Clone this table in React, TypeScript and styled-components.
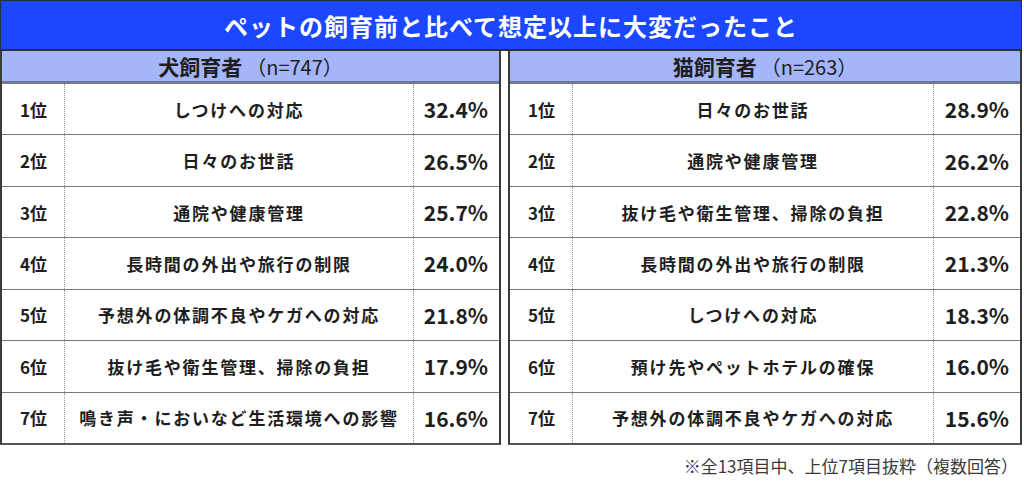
import * as React from "react";
import styled, { createGlobalStyle } from "styled-components";

type Item = {
  label: string;
  pct: string;
};

type Group = {
  name: string;
  n: number;
  items: Item[];
};

const groups: Group[] = [
  {
    name: "犬飼育者",
    n: 747,
    items: [
      { label: "しつけへの対応", pct: "32.4%" },
      { label: "日々のお世話", pct: "26.5%" },
      { label: "通院や健康管理", pct: "25.7%" },
      { label: "長時間の外出や旅行の制限", pct: "24.0%" },
      { label: "予想外の体調不良やケガへの対応", pct: "21.8%" },
      { label: "抜け毛や衛生管理、掃除の負担", pct: "17.9%" },
      { label: "鳴き声・においなど生活環境への影響", pct: "16.6%" },
    ],
  },
  {
    name: "猫飼育者",
    n: 263,
    items: [
      { label: "日々のお世話", pct: "28.9%" },
      { label: "通院や健康管理", pct: "26.2%" },
      { label: "抜け毛や衛生管理、掃除の負担", pct: "22.8%" },
      { label: "長時間の外出や旅行の制限", pct: "21.3%" },
      { label: "しつけへの対応", pct: "18.3%" },
      { label: "預け先やペットホテルの確保", pct: "16.0%" },
      { label: "予想外の体調不良やケガへの対応", pct: "15.6%" },
    ],
  },
];

const GlobalStyle = createGlobalStyle`
  html, body {
    margin: 0;
    padding: 0;
    background: #ffffff;
  }
  body {
    font-family: "Noto Sans CJK JP", "Noto Sans", sans-serif;
    color: #1e1e1e;
  }
  * {
    box-sizing: border-box;
  }
`;

const Page = styled.div`
  width: 1024px;
  height: 484px;
  padding-right: 2px;
  display: flex;
  flex-direction: column;
`;

const TitleBar = styled.div`
  height: 51px;
  background: #1a47ff;
  border: 1px solid #2a2d3c;
  border-bottom-width: 2px;
  color: #ffffff;
  display: flex;
  align-items: center;
  justify-content: center;
  font-size: 24px;
  font-weight: 700;
  letter-spacing: 1px;
`;

const Tables = styled.div`
  display: flex;
  gap: 7px;
  height: 394px;
`;

const Table = styled.div<{ $width: number }>`
  width: ${(p) => p.$width}px;
  display: flex;
  flex-direction: column;
  border-left: 2px solid #3a3a3a;
  border-right: 2px solid #3a3a3a;
  border-bottom: 2px solid #555555;
`;

const Head = styled.div`
  height: 32px;
  background: #a5b5f9;
  border-bottom: 2px solid #6d779c;
  display: flex;
  align-items: center;
  justify-content: center;
  font-size: 21px;
  font-weight: 700;
`;

const HeadN = styled.span`
  font-weight: 400;
  font-size: 20px;
  margin-left: 4px;
`;

const Row = styled.div<{ $rankW: number; $pctW: number }>`
  flex: 1;
  display: grid;
  grid-template-columns: ${(p) => p.$rankW}px 1fr ${(p) => p.$pctW}px;
  border-top: 1px solid #7a7a7a;
  &:first-of-type {
    border-top: none;
  }
`;

const Rank = styled.div`
  display: flex;
  align-items: center;
  padding-left: 18px;
  font-size: 17px;
  font-weight: 700;
  border-right: 1px dotted #9a9a9a;
`;

const Label = styled.div`
  display: flex;
  align-items: center;
  justify-content: center;
  font-size: 17px;
  font-weight: 700;
  letter-spacing: 1.8px;
  border-right: 1px dotted #9a9a9a;
`;

const Pct = styled.div`
  display: flex;
  align-items: center;
  justify-content: flex-end;
  padding-right: 11px;
  font-size: 21px;
  font-weight: 700;
`;

const Note = styled.div`
  text-align: right;
  padding: 8px 4px 0 0;
  font-size: 17px;
  color: #3a3a3a;
`;

const RankTable: React.FC<{ group: Group; width: number; rankW: number; pctW: number }> = ({
  group,
  width,
  rankW,
  pctW,
}) => (
  <Table $width={width}>
    <Head>
      {group.name}
      <HeadN>（n={group.n}）</HeadN>
    </Head>
    {group.items.map((item, i) => (
      <Row key={item.label} $rankW={rankW} $pctW={pctW}>
        <Rank>{i + 1}位</Rank>
        <Label>{item.label}</Label>
        <Pct>{item.pct}</Pct>
      </Row>
    ))}
  </Table>
);

export default function App() {
  return (
    <Page>
      <GlobalStyle />
      <TitleBar>ペットの飼育前と比べて想定以上に大変だったこと</TitleBar>
      <Tables>
        <RankTable group={groups[0]} width={501} rankW={63} pctW={85} />
        <RankTable group={groups[1]} width={514} rankW={63} pctW={86} />
      </Tables>
      <Note>※全13項目中、上位7項目抜粋（複数回答）</Note>
    </Page>
  );
}
